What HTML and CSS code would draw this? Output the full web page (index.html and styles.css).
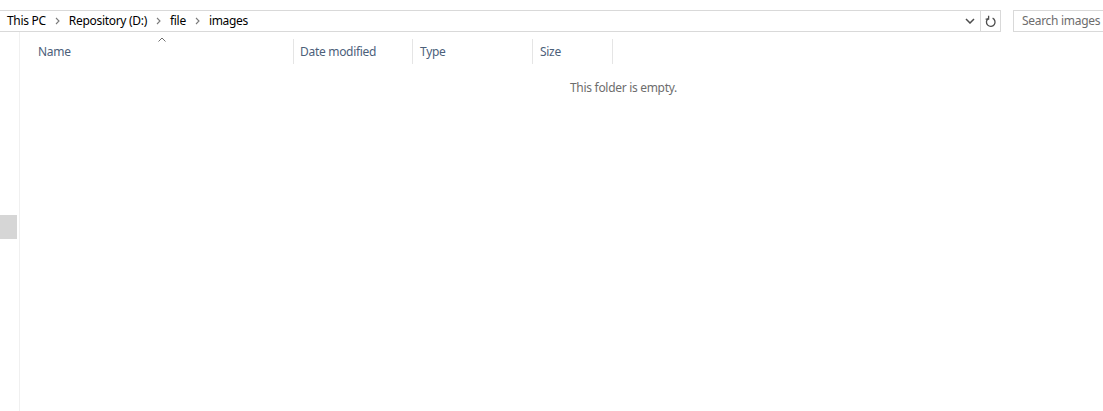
FILE: index.html
```html
<!DOCTYPE html>
<html>
<head>
<meta charset="utf-8">
<link rel="stylesheet" href="styles.css">
</head>
<body>
<div class="window">
  <div class="bar">
    <div class="address">
      <div class="crumbs">
        <span class="crumb first">This PC</span>
        <svg class="chev" width="5" height="8" viewBox="0 0 5 8"><path d="M1 1 L4 4 L1 7" fill="none" stroke="#7a7a7a" stroke-width="1.1"/></svg>
        <span class="crumb">Repository (D:)</span>
        <svg class="chev" width="5" height="8" viewBox="0 0 5 8"><path d="M1 1 L4 4 L1 7" fill="none" stroke="#7a7a7a" stroke-width="1.1"/></svg>
        <span class="crumb">file</span>
        <svg class="chev" width="5" height="8" viewBox="0 0 5 8"><path d="M1 1 L4 4 L1 7" fill="none" stroke="#7a7a7a" stroke-width="1.1"/></svg>
        <span class="crumb">images</span>
      </div>
      <div class="drop">
        <svg width="10" height="6" viewBox="0 0 10 6"><path d="M1 1 L5 5 L9 1" fill="none" stroke="#4d4d4d" stroke-width="1.5"/></svg>
      </div>
      <div class="refresh">
        <svg width="12" height="13" viewBox="0 0 12 13"><path d="M3.2 3.6 A4.3 4.3 0 1 0 7.6 3.2" fill="none" stroke="#4d4d4d" stroke-width="1.3"/><path d="M3.6 0.8 L3.6 4.2 L0.6 4.2" fill="none" stroke="#4d4d4d" stroke-width="1.3"/></svg>
      </div>
    </div>
    <div class="search">Search images</div>
  </div>
  <div class="main">
    <div class="nav">
      <div class="thumb"></div>
    </div>
    <div class="content">
      <div class="header">
        <div class="col name">Name<span class="sort"><svg width="8" height="5" viewBox="0 0 8 5"><path d="M0.5 4.5 L4 1 L7.5 4.5" fill="none" stroke="#6f6f6f" stroke-width="1"/></svg></span></div>
        <div class="col date">Date modified</div>
        <div class="col type">Type</div>
        <div class="col size">Size</div>
      </div>
      <div class="empty">This folder is empty.</div>
    </div>
  </div>
</div>
</body>
</html>
```

FILE: styles.css
```css
html, body {
  margin: 0;
  padding: 0;
  background: #ffffff;
  height: 100%;
  overflow: hidden;
}
body {
  font-family: "Noto Sans", "Open Sans", sans-serif;
  font-size: 12px;
  letter-spacing: -0.3px;
  color: #000;
}
.window {
  display: flex;
  flex-direction: column;
  height: 411px;
}
.bar {
  display: flex;
  padding-top: 10px;
  height: 22px;
}
.address {
  width: 1001px;
  box-sizing: border-box;
  height: 22px;
  border-top: 1px solid #d9d9d9;
  border-bottom: 1px solid #d9d9d9;
  border-right: 1px solid #d9d9d9;
  display: flex;
  align-items: center;
}
.crumbs {
  flex: 1;
  display: flex;
  align-items: center;
  padding-left: 7px;
  white-space: nowrap;
}
.crumb {
  line-height: 20px;
}
.chev {
  margin: 0 9px 0 9px;
}
.drop {
  width: 20px;
  height: 20px;
  display: flex;
  align-items: center;
  justify-content: center;
  padding-left: 1px;
}
.refresh {
  width: 19px;
  height: 20px;
  border-left: 1px solid #d9d9d9;
  display: flex;
  align-items: center;
  justify-content: center;
}
.search {
  margin-left: 12px;
  flex: 1;
  height: 22px;
  box-sizing: border-box;
  border: 1px solid #d9d9d9;
  border-right: none;
  padding-left: 8px;
  line-height: 20px;
  color: #6d6d6d;
  white-space: nowrap;
}
.main {
  flex: 1;
  display: flex;
}
.nav {
  width: 19px;
  border-right: 1px solid #f0f0f0;
  padding-top: 183px;
}
.thumb {
  width: 17px;
  height: 24px;
  background: #d6d6d6;
}
.content {
  flex: 1;
  padding-top: 7px;
}
.header {
  display: flex;
  height: 25px;
}
.col {
  position: relative;
  box-sizing: border-box;
  color: #4c607a;
  line-height: 25px;
  border-right: 1px solid #e5e5e5;
  white-space: nowrap;
}
.name {
  width: 274px;
  padding-left: 18px;
}
.date {
  width: 119px;
  padding-left: 6px;
}
.type {
  width: 120px;
  padding-left: 7px;
}
.size {
  width: 80px;
  padding-left: 7px;
}
.sort {
  position: absolute;
  left: 138px;
  top: -2px;
  line-height: 0;
}
.empty {
  margin-top: 16px;
  padding-left: 550px;
  color: #6d6d6d;
  line-height: 16px;
}
```
